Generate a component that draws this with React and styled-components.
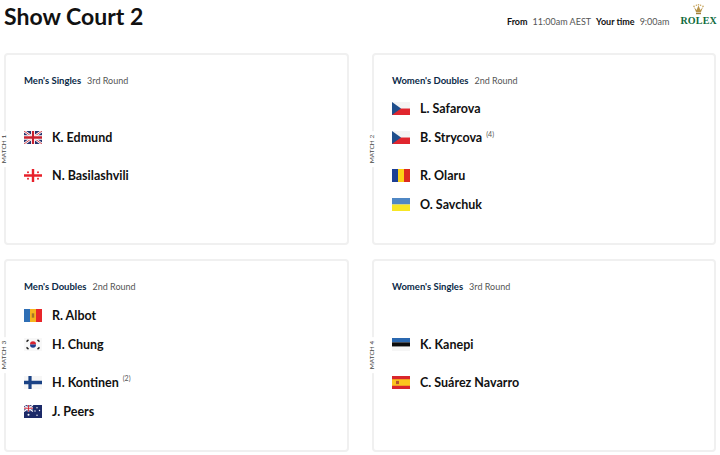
import styled, { createGlobalStyle } from "styled-components";

const GlobalStyle = createGlobalStyle`
  html, body {
    margin: 0;
    padding: 0;
    background: #fff;
    font-family: Lato, "Liberation Sans", sans-serif;
  }
`;

const Page = styled.div`
  width: 720px;
  height: 455px;
  overflow: hidden;
`;

const Header = styled.header`
  display: flex;
  justify-content: space-between;
  height: 52.8px;
  padding: 0 3px 0 4px;
  box-sizing: border-box;
`;

const Title = styled.h1`
  margin: 2px 0 0;
  font-size: 23px;
  line-height: 29px;
  font-weight: 700;
  color: #111;
`;

const Meta = styled.div`
  display: flex;
  align-items: flex-start;
`;

const Times = styled.div`
  display: flex;
  gap: 5px;
  margin: 16px 11px 0 0;
  font-size: 9px;
  line-height: 11px;
`;

const TimeLabel = styled.span`
  font-weight: 700;
  color: #111;
`;

const TimeValue = styled.span`
  color: #555;
`;

const Logo = styled.div`
  display: flex;
  flex-direction: column;
  align-items: center;
  margin-top: 4px;
`;

const LogoText = styled.span`
  font-family: "Liberation Serif", serif;
  font-size: 10px;
  line-height: 11px;
  font-weight: 700;
  letter-spacing: 0.2px;
  color: #0e6b3c;
`;

const Grid = styled.main`
  display: grid;
  grid-template-columns: 345px 344px;
  grid-template-rows: 192.2px 193px;
  column-gap: 23px;
  row-gap: 14px;
  padding-left: 4px;
`;

const Card = styled.section`
  position: relative;
  box-sizing: border-box;
  padding: 20px 18px;
  border: 2px solid #f0f0f0;
  border-radius: 4px;
`;

const MatchTag = styled.span`
  position: absolute;
  left: -2px;
  top: 50%;
  transform: translate(-50%, -50%) rotate(-90deg);
  padding: 0 4px;
  background: #fff;
  font-size: 6.5px;
  line-height: 8px;
  white-space: nowrap;
  color: #444;
`;

const Heading = styled.div`
  display: flex;
  gap: 6px;
  height: 12px;
  margin-bottom: 7.6px;
  font-size: 9.5px;
  line-height: 12px;
`;

const Event = styled.span`
  font-weight: 700;
  color: #0b2a47;
`;

const Round = styled.span`
  font-size: 9px;
  color: #555;
`;

const Teams = styled.div`
  display: flex;
  flex-direction: column;
  gap: 9px;
`;

const Team = styled.div`
  display: flex;
  flex-direction: column;
  height: 58px;
  justify-content: ${(p) => (p.$first ? "flex-end" : "flex-start")};
`;

const Player = styled.div`
  display: flex;
  align-items: center;
  gap: 10px;
  height: 29px;
`;

const Name = styled.span`
  font-size: 12.5px;
  font-weight: 700;
  color: #111;
`;

const Seed = styled.sup`
  margin-left: 4px;
  font-size: 7px;
  line-height: 0;
  font-weight: 400;
  color: #555;
`;

const FlagBox = styled.svg`
  display: block;
  flex: none;
  width: 18px;
  height: 13px;
`;

const flags = {
  gbr: (
    <>
      <rect width="18" height="12" fill="#26336e" />
      <path d="M0 0L18 12M18 0L0 12" stroke="#fff" strokeWidth="2.4" />
      <path d="M0 0L18 12M18 0L0 12" stroke="#c8202f" strokeWidth="0.8" />
      <path d="M9 0V12M0 6H18" stroke="#fff" strokeWidth="4" />
      <path d="M9 0V12M0 6H18" stroke="#c8202f" strokeWidth="2.2" />
    </>
  ),
  geo: (
    <>
      <rect width="18" height="12" fill="#fff" />
      <path d="M9 0V12M0 6H18" stroke="#e8202a" strokeWidth="2.4" />
      <path d="M4 2V4M3 3H5M14 2V4M13 3H15M4 8V10M3 9H5M14 8V10M13 9H15" stroke="#e8202a" strokeWidth="1" />
    </>
  ),
  cze: (
    <>
      <rect width="18" height="6" fill="#f4f4f4" />
      <rect y="6" width="18" height="6" fill="#e0262e" />
      <path d="M0 0L9 6L0 12Z" fill="#1f4e8c" />
    </>
  ),
  rou: (
    <>
      <rect width="6" height="12" fill="#1d3f94" />
      <rect x="6" width="6" height="12" fill="#fcd116" />
      <rect x="12" width="6" height="12" fill="#dc2a20" />
    </>
  ),
  ukr: (
    <>
      <rect width="18" height="6" fill="#4f87c4" />
      <rect y="6" width="18" height="6" fill="#f7e625" />
    </>
  ),
  mda: (
    <>
      <rect width="6" height="12" fill="#2f6fb5" />
      <rect x="6" width="6" height="12" fill="#f5b51e" />
      <rect x="12" width="6" height="12" fill="#e8262a" />
      <rect x="7.8" y="4" width="2.4" height="4" fill="#a5742a" />
    </>
  ),
  kor: (
    <>
      <rect width="18" height="12" fill="#f8f8f8" />
      <path d="M6 6a3 3 0 0 1 6 0Z" fill="#d8232f" />
      <path d="M6 6a3 3 0 0 0 6 0Z" fill="#1f3f8f" />
      <path d="M2.5 3.4L4.5 1.8M13.5 1.8L15.5 3.4M2.5 8.6L4.5 10.2M13.5 10.2L15.5 8.6" stroke="#222" strokeWidth="1.4" />
    </>
  ),
  fin: (
    <>
      <rect width="18" height="12" fill="#f6f6f6" />
      <path d="M6 0V12M0 6H18" stroke="#1a4285" strokeWidth="3.2" />
    </>
  ),
  aus: (
    <>
      <rect width="18" height="12" fill="#1c2a68" />
      <rect width="9" height="6" fill="#39407c" />
      <path d="M0 0L9 6M9 0L0 6" stroke="#fff" strokeWidth="1" />
      <path d="M4.5 0V6M0 3H9" stroke="#fff" strokeWidth="1.8" />
      <path d="M4.5 0V6M0 3H9" stroke="#d0273a" strokeWidth="0.9" />
      <circle cx="4.5" cy="9" r="1" fill="#fff" />
      <circle cx="13" cy="2.5" r="0.7" fill="#fff" />
      <circle cx="11" cy="5.5" r="0.7" fill="#fff" />
      <circle cx="15.5" cy="5" r="0.7" fill="#fff" />
      <circle cx="13" cy="9.5" r="0.7" fill="#fff" />
    </>
  ),
  est: (
    <>
      <rect width="18" height="4" fill="#2a68b0" />
      <rect y="4" width="18" height="4" fill="#0c0c0c" />
      <rect y="8" width="18" height="4" fill="#f6f6f6" />
    </>
  ),
  esp: (
    <>
      <rect width="18" height="12" fill="#d9262c" />
      <rect y="3" width="18" height="6" fill="#fbc61e" />
      <rect x="4" y="4.5" width="3" height="3" fill="#b5552a" />
    </>
  ),
};

const Flag = ({ code }) => (
  <FlagBox viewBox="0 0 18 12" preserveAspectRatio="none" aria-hidden="true">
    {flags[code]}
  </FlagBox>
);

const Crown = () => (
  <svg width="11" height="11" viewBox="0 0 11 11" aria-hidden="true">
    <path d="M1 3L3 8H8L10 3L7.4 6L5.5 1.5L3.6 6Z" fill="#b8944a" />
    <circle cx="1" cy="2.4" r="0.8" fill="#c9a862" />
    <circle cx="3.4" cy="1.2" r="0.8" fill="#c9a862" />
    <circle cx="5.5" cy="0.8" r="0.8" fill="#c9a862" />
    <circle cx="7.6" cy="1.2" r="0.8" fill="#c9a862" />
    <circle cx="10" cy="2.4" r="0.8" fill="#c9a862" />
    <rect x="3" y="8.6" width="5" height="1.6" fill="#a08038" />
  </svg>
);

const matches = [
  {
    tag: "MATCH 1",
    event: "Men's Singles",
    round: "3rd Round",
    teams: [
      [{ flag: "gbr", name: "K. Edmund" }],
      [{ flag: "geo", name: "N. Basilashvili" }],
    ],
  },
  {
    tag: "MATCH 2",
    event: "Women's Doubles",
    round: "2nd Round",
    teams: [
      [
        { flag: "cze", name: "L. Safarova" },
        { flag: "cze", name: "B. Strycova", seed: "(4)" },
      ],
      [
        { flag: "rou", name: "R. Olaru" },
        { flag: "ukr", name: "O. Savchuk" },
      ],
    ],
  },
  {
    tag: "MATCH 3",
    event: "Men's Doubles",
    round: "2nd Round",
    teams: [
      [
        { flag: "mda", name: "R. Albot" },
        { flag: "kor", name: "H. Chung" },
      ],
      [
        { flag: "fin", name: "H. Kontinen", seed: "(2)" },
        { flag: "aus", name: "J. Peers" },
      ],
    ],
  },
  {
    tag: "MATCH 4",
    event: "Women's Singles",
    round: "3rd Round",
    teams: [
      [{ flag: "est", name: "K. Kanepi" }],
      [{ flag: "esp", name: "C. Suárez Navarro" }],
    ],
  },
];

export default function App() {
  return (
    <Page>
      <GlobalStyle />
      <Header>
        <Title>Show Court 2</Title>
        <Meta>
          <Times>
            <TimeLabel>From</TimeLabel>
            <TimeValue>11:00am AEST</TimeValue>
            <TimeLabel>Your time</TimeLabel>
            <TimeValue>9:00am</TimeValue>
          </Times>
          <Logo>
            <Crown />
            <LogoText>ROLEX</LogoText>
          </Logo>
        </Meta>
      </Header>
      <Grid>
        {matches.map((match) => (
          <Card key={match.tag}>
            <MatchTag>{match.tag}</MatchTag>
            <Heading>
              <Event>{match.event}</Event>
              <Round>{match.round}</Round>
            </Heading>
            <Teams>
              {match.teams.map((team, i) => (
                <Team key={i} $first={i === 0}>
                  {team.map((player) => (
                    <Player key={player.name}>
                      <Flag code={player.flag} />
                      <Name>
                        {player.name}
                        {player.seed && <Seed>{player.seed}</Seed>}
                      </Name>
                    </Player>
                  ))}
                </Team>
              ))}
            </Teams>
          </Card>
        ))}
      </Grid>
    </Page>
  );
}
